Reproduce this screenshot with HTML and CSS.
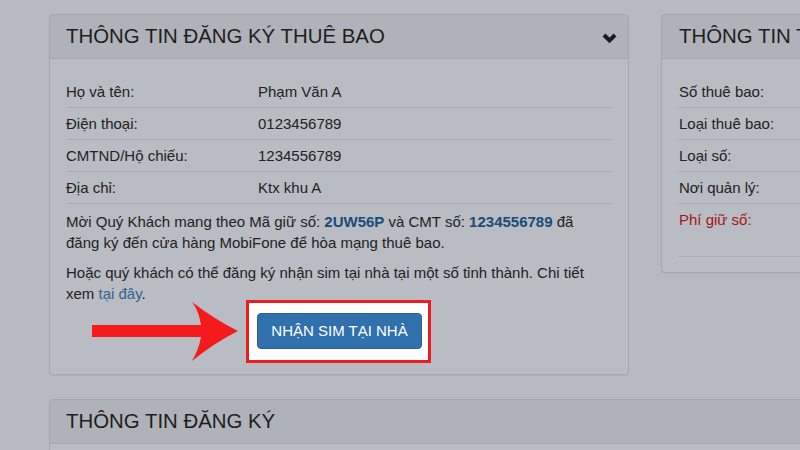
FILE: index.html
```html
<!DOCTYPE html>
<html lang="vi">
<head>
    <meta charset="UTF-8">
    <meta name="viewport" content="width=device-width, initial-scale=1.0">
    <title>Đăng ký thuê bao</title>
    <link rel="stylesheet" href="styles.css">
</head>
<body>
    <div class="page">
        <div class="columns">
            <div class="panel">
                <div class="panel-heading">
                    <h3>Thông tin đăng ký thuê bao</h3>
                    <svg class="chevron" width="15" height="12" viewBox="0 0 15 12">
                        <polyline points="2,3 7.5,8.5 13,3" />
                    </svg>
                </div>
                <div class="panel-body">
                    <table class="info-table">
                        <tr><td class="label">Họ và tên:</td><td>Phạm Văn A</td></tr>
                        <tr><td class="label">Điện thoại:</td><td>0123456789</td></tr>
                        <tr><td class="label">CMTND/Hộ chiếu:</td><td>1234556789</td></tr>
                        <tr><td class="label">Địa chỉ:</td><td>Ktx khu A</td></tr>
                        <tr>
                            <td colspan="2" class="note">
                                <p>Mời Quý Khách mang theo Mã giữ số: <b>2UW56P</b> và CMT số: <b>1234556789</b> đã đăng ký đến cửa hàng MobiFone để hòa mạng thuê bao.</p>
                                <p>Hoặc quý khách có thể đăng ký nhận sim tại nhà tại một số tỉnh thành. Chi tiết xem <a href="#">tại đây</a>.</p>
                                <div class="cta">
                                    <div class="cta-mark">
                                        <svg class="arrow" width="154" height="70" viewBox="0 0 154 70">
                                            <path d="M4 28 L113 28 Q111 14 104 5 Q126 22 150 34 Q126 46 104 64 Q111 52 113 40 L4 40 Z" />
                                        </svg>
                                        <span class="highlight"></span>
                                        <button type="button" class="btn">NHẬN SIM TẠI NHÀ</button>
                                    </div>
                                </div>
                            </td>
                        </tr>
                    </table>
                </div>
            </div>

            <div class="panel side">
                <div class="panel-heading">
                    <h3>Thông tin thuê bao</h3>
                </div>
                <div class="panel-body">
                    <table class="info-table">
                        <tr><td class="label">Số thuê bao:</td><td>0901234567</td></tr>
                        <tr><td class="label">Loại thuê bao:</td><td>Trả trước</td></tr>
                        <tr><td class="label">Loại số:</td><td>Thường</td></tr>
                        <tr><td class="label">Nơi quản lý:</td><td>MobiFone</td></tr>
                        <tr class="last"><td class="label fee">Phí giữ số:</td><td>0 đ<br>(đã gồm VAT)</td></tr>
                    </table>
                </div>
            </div>
        </div>

        <div class="panel wide">
            <div class="panel-heading">
                <h3>Thông tin đăng ký</h3>
            </div>
            <div class="panel-body"></div>
        </div>
    </div>
</body>
</html>
```

FILE: styles.css
```css
html {
    overflow: hidden;
}
body {
    margin: 0;
    background-color: #b7bac1;
    font-family: "Liberation Sans", Arial, sans-serif;
    font-size: 15px;
    line-height: 21px;
    color: #222;
}
.page {
    padding: 14px 0 0 49px;
}
.columns {
    display: grid;
    grid-template-columns: 580px 420px;
    column-gap: 32px;
    align-items: start;
}
.panel {
    background-color: #b9bcc3;
    border: 1px solid #a5a8ae;
    border-radius: 4px;
    box-shadow: 0 1px 1px rgba(0, 0, 0, 0.05);
}
.panel-heading {
    display: flex;
    align-items: center;
    justify-content: space-between;
    padding: 10px 11px 10px 16px;
    background-color: #afb2b8;
    border-bottom: 1px solid #a5a8ae;
    border-radius: 3px 3px 0 0;
}
.panel-heading h3 {
    margin: 0;
    font-size: 20.4px;
    line-height: 23px;
    font-weight: normal;
    text-transform: uppercase;
    color: #1e1e1e;
}
.chevron {
    margin-top: 2px;
}
.chevron polyline {
    fill: none;
    stroke: #1c1c1c;
    stroke-width: 4;
}
.panel-body {
    padding: 15px 15px 15px 16px;
}
.info-table {
    width: 100%;
    border-collapse: collapse;
}
.info-table td {
    padding: 5px 0;
    vertical-align: top;
}
.info-table tr:first-child td {
    padding-top: 7px;
}
.info-table tr + tr td {
    border-top: 1px solid #aaadb3;
}
.info-table .label {
    width: 192px;
}
.info-table .fee {
    color: #a3161b;
}
.info-table tr.last td {
    border-bottom: 1px solid #aaadb3;
}
.info-table .note {
    padding: 7px 12px 0 0;
}
.note p {
    margin: 0 0 9px;
}
.note b {
    color: #1b4b78;
}
.note a {
    color: #37628c;
    text-decoration: none;
}
.cta {
    text-align: center;
    padding: 0 0 0 12px;
    margin-bottom: 10px;
}
.cta-mark {
    display: inline-block;
    position: relative;
}
.highlight {
    position: absolute;
    top: -13px;
    right: -9px;
    bottom: -14px;
    left: -11px;
    border: 3px solid #ee1b1f;
    background-color: #fff;
}
.arrow {
    position: absolute;
    top: -16px;
    right: calc(100% + 15px);
}
.arrow path {
    fill: #f51a1c;
}
.btn {
    position: relative;
    padding: 6px 13px;
    font-family: inherit;
    font-size: 15px;
    line-height: 22px;
    color: #fff;
    background-color: #2f70ad;
    border: 1px solid #2a6399;
    border-radius: 4px;
    cursor: pointer;
}
.side .panel-heading {
    padding-left: 17px;
}
.side .panel-body {
    padding-left: 17px;
}
.wide {
    width: 1032px;
    margin-top: 24px;
}
.wide .panel-body {
    height: 60px;
}
```
